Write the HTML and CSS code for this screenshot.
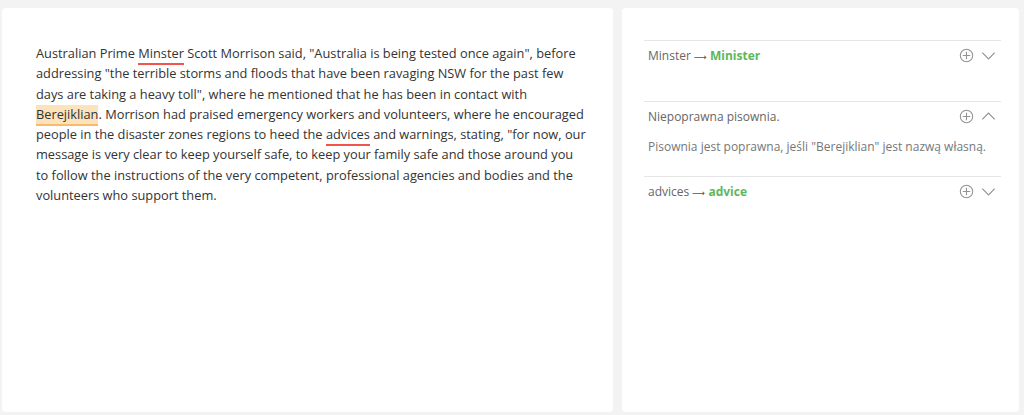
FILE: index.html
```html
<!DOCTYPE html>
<html lang="en">
<head>
    <meta charset="UTF-8">
    <meta name="viewport" content="width=device-width, initial-scale=1.0">
    <title>Proofreader</title>
    <link rel="stylesheet" href="styles.css">
</head>
<body>
    <div class="workspace">
        <div class="editor">
            <p class="editor-text">
                Australian Prime <span class="mark mark-error">Minster</span> Scott Morrison said, "Australia is being tested once again", before addressing "the terrible storms and floods that have been ravaging NSW for the past few days are taking a heavy toll", where he mentioned that he has been in contact with <span class="mark mark-active">Berejiklian</span>. Morrison had praised emergency workers and volunteers, where he encouraged people in the disaster zones regions to heed the <span class="mark mark-error">advices</span> and warnings, stating, "for now, our message is very clear to keep yourself safe, to keep your family safe and those around you to follow the instructions of the very competent, professional agencies and bodies and the volunteers who support them.
            </p>
        </div>

        <div class="sidebar">
            <div class="issue issue-tall">
                <div class="issue-head">
                    <span class="issue-title">Minster <span class="arrow">&#10230;</span> <b class="fix">Minister</b></span>
                    <span class="issue-actions">
                        <svg class="icon" viewBox="0 0 15 15"><circle cx="7.5" cy="7.5" r="6.2"/><path d="M7.5 3.8v7.4M3.8 7.5h7.4"/></svg>
                        <svg class="icon chevron" viewBox="0 0 15 15"><path d="M1.3 4.6L7.5 10.8l6.2-6.2"/></svg>
                    </span>
                </div>
            </div>

            <div class="issue">
                <div class="issue-head">
                    <span class="issue-title">Niepoprawna pisownia.</span>
                    <span class="issue-actions">
                        <svg class="icon" viewBox="0 0 15 15"><circle cx="7.5" cy="7.5" r="6.2"/><path d="M7.5 3.8v7.4M3.8 7.5h7.4"/></svg>
                        <svg class="icon chevron" viewBox="0 0 15 15"><path d="M1.3 10.4L7.5 4.2l6.2 6.2"/></svg>
                    </span>
                </div>
                <p class="issue-body">Pisownia jest poprawna, jeśli "Berejiklian" jest nazwą własną.</p>
            </div>

            <div class="issue">
                <div class="issue-head">
                    <span class="issue-title">advices <span class="arrow">&#10230;</span> <b class="fix">advice</b></span>
                    <span class="issue-actions">
                        <svg class="icon" viewBox="0 0 15 15"><circle cx="7.5" cy="7.5" r="6.2"/><path d="M7.5 3.8v7.4M3.8 7.5h7.4"/></svg>
                        <svg class="icon chevron" viewBox="0 0 15 15"><path d="M1.3 4.6L7.5 10.8l6.2-6.2"/></svg>
                    </span>
                </div>
            </div>
        </div>
    </div>
</body>
</html>
```

FILE: styles.css
```css
* {
    margin: 0;
    padding: 0;
    box-sizing: border-box;
    font-family: 'Open Sans', 'Noto Sans', sans-serif;
}

body {
    background-color: #f3f3f3;
    height: 100vh;
    padding: 8px 5px 3px 2px;
}

.workspace {
    display: flex;
    gap: 9px;
    height: 100%;
}

.editor {
    width: 611px;
    background-color: white;
    border-radius: 4px;
    padding: 35px 27px 0 34px;
}

.editor-text {
    font-size: 12.8px;
    line-height: 20.3px;
    color: #333;
}

.mark {
    padding-bottom: 1px;
}

.mark-error {
    border-bottom: 2px solid #f0544c;
}

.mark-active {
    background-color: #fde3bb;
    border-bottom: 2px solid #f7bb6a;
}

.sidebar {
    flex: 1;
    background-color: white;
    border-radius: 4px;
    padding: 32px 18px 0 22px;
}

.issue {
    border-top: 1px solid #e6e6e6;
    padding: 4px 0 19px 4px;
}

.issue-tall {
    min-height: 61px;
}

.issue-head {
    display: flex;
    align-items: center;
    justify-content: space-between;
    height: 20px;
}

.issue-title {
    font-size: 12px;
    color: #666;
}

.arrow {
    font-family: 'DejaVu Sans', sans-serif;
    font-size: 9px;
    color: #555;
}

.fix {
    color: #5cb85c;
    font-weight: 700;
}

.issue-actions {
    display: flex;
    align-items: center;
    gap: 7px;
    padding-right: 5px;
}

.icon {
    width: 15px;
    height: 15px;
    fill: none;
    stroke: #939393;
    stroke-width: 1.1;
}

.chevron {
    stroke-width: 1.2;
}

.issue-body {
    margin-top: 11px;
    font-size: 12px;
    line-height: 20px;
    color: #777;
}
```
